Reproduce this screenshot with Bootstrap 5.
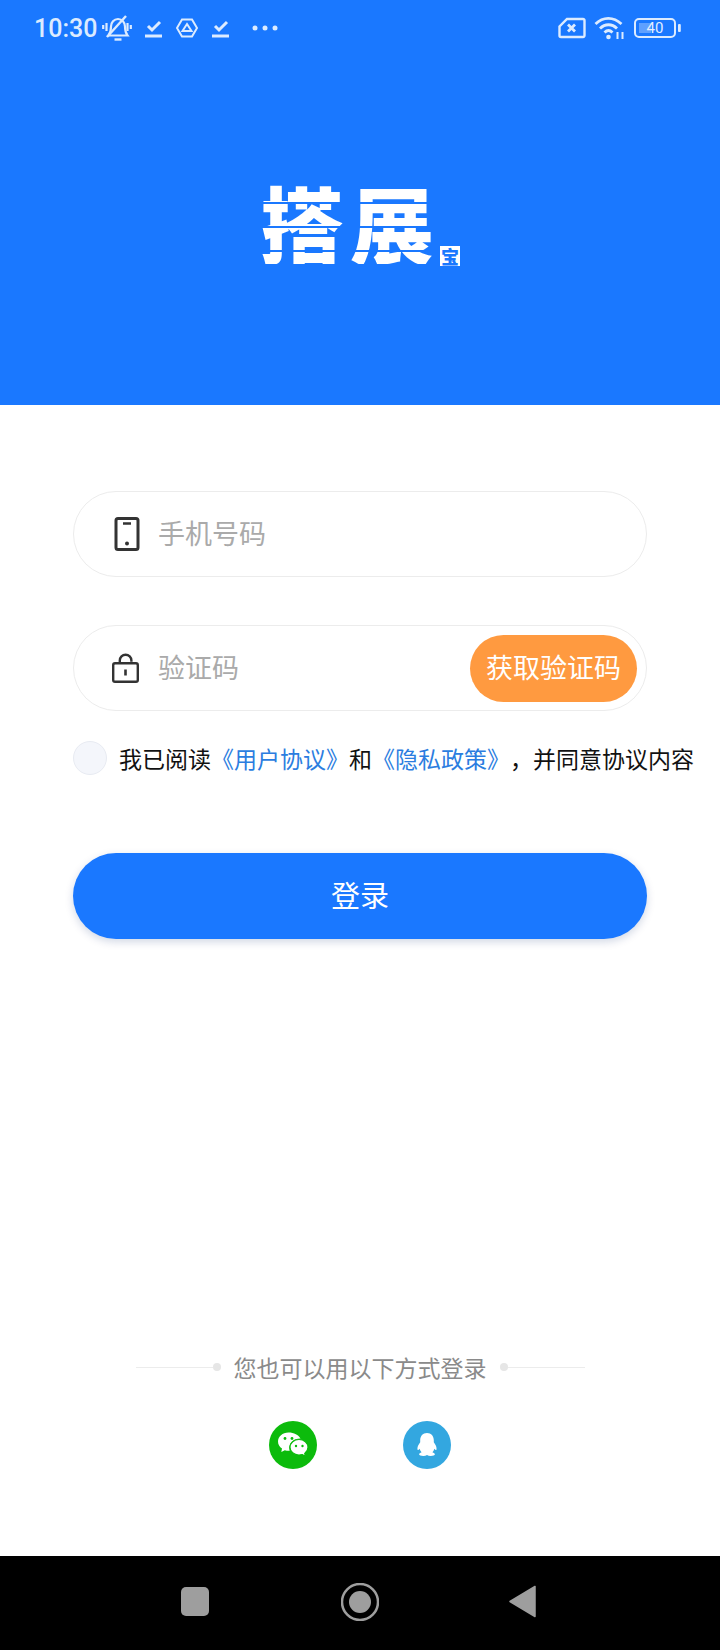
<!DOCTYPE html>
<html lang="zh">
<head>
<meta charset="utf-8">
<title>搭展宝</title>
<link href="https://cdn.jsdelivr.net/npm/bootstrap@5.3.0/dist/css/bootstrap.min.css" rel="stylesheet">
<style>
html,body{margin:0;height:1650px;overflow:hidden;background:#fff}
body{font-family:"Noto Sans CJK SC","Liberation Sans",sans-serif;color:#111;text-spacing-trim:space-all}
.shell{width:720px;height:1650px}
.hero{height:405px;background:#1a78ff}
.statusbar{height:56px;padding:0 39px 0 34px;color:#dcebff}
.clock{font:500 25px/1 Roboto,sans-serif;width:62px;margin-right:6px;white-space:nowrap}
.statusbar svg{display:block;fill:none;stroke:currentColor;stroke-width:2}
.gap-check{margin-left:13px}
.gap-tri{margin-left:13px}
.gap-check2{margin-left:14px}
.gap-dots{margin-left:22px}
.wordmark{height:349px;padding-bottom:18px}
.logo-text{font-size:84px;line-height:84px;font-weight:900;letter-spacing:6px;color:transparent;background:repeating-linear-gradient(180deg,#fff 0,#fff 22px,#1a78ff 22px,#1a78ff 24px);-webkit-background-clip:text;background-clip:text}
.logo-sub{width:20px;height:20px;background:#fff;color:#1a78ff;font-size:18px;line-height:20px;font-weight:900;margin-left:0;margin-bottom:-2px}
.formwrap{padding:86px 73px 0}
.pillfield{height:86px;border:1px solid #ececec;border-radius:43px;background:#fff;padding-left:38px}
.pillfield+.pillfield{margin-top:48px}
.fieldicon{width:30px;flex:none;margin-right:16px}
.fieldinput{flex:1;min-width:0;border:0;outline:0;background:transparent;font-size:27px;padding:0 0 2px;color:#333}
.fieldinput::placeholder{color:#aaa;opacity:1}
.codebtn{width:167px;height:67px;border:0;border-radius:34px;background:#ff9a40;color:#fff;font-size:27px;margin-right:9px;padding:0 0 2px;white-space:nowrap}
.agree{margin-top:29px;height:36px;font-size:23px;white-space:nowrap;width:640px}
.tickcircle{width:34px;height:34px;border-radius:50%;background:#f4f6fb;border:1px solid #e8ebf2;margin-right:12px;flex:none}
.agree a{color:#2b7de0;text-decoration:none}
.loginbtn{display:block;width:574px;height:86px;margin-top:77px;border:0;border-radius:43px;background:#1a78ff;color:#fff;font-size:29px;box-shadow:0 3px 8px rgba(0,40,110,.18);padding:0 0 2px}
.altlogin{margin-top:auto;padding-bottom:87px}
.altline{width:77px;height:1px;background:#ececec}
.altdot{width:8px;height:8px;border-radius:50%;background:#e6e6e6}
.alttext{font-size:23px;line-height:34px;color:#8a8a8a;margin:0 13px}
.altrow{gap:86px;margin-top:37px}
.socialbtn{width:48px;height:48px;border-radius:50%;border:0;padding:0;display:block}
.socialbtn svg{display:block}
.wx{background:#0cbb0c}
.qq{background:#33a7e0}
.navbarbottom{height:94px;background:#000;padding-left:181px;padding-bottom:3px}
.navsquare{width:28px;height:29px;border-radius:5px;background:#9e9e9e}
.navcircle{margin-left:132px;margin-right:130px;display:block}
.navtri{display:block}
</style>
</head>
<body>
<div class="shell d-flex flex-column">
  <header class="hero d-flex flex-column">
    <div class="statusbar d-flex align-items-center">
      <span class="clock">10:30</span>
      <svg width="30" height="28" viewBox="0 0 30 28"><path d="M6.500 21.500c1.500-2 2.500-5 2.500-9 0-4 3-7.500 7-7.500s7 3.500 7 7.500c0 4 1 7 2.500 9z" stroke-width="2.200"/><path d="M12.500 25.500h7" stroke-width="2.400"/><path d="M5 23L24 2" stroke-width="2.400"/><path d="M4.500 9v8M1.200 11v4M25.500 9v8M28.800 11v4" stroke-width="2.200"/></svg>
      <svg class="gap-check" width="18" height="20" viewBox="0 0 18 20"><path d="M3 8l4 4 8-8" stroke-width="3"/><path d="M0 18h17" stroke-width="3"/></svg>
      <svg class="gap-tri" width="22" height="20" viewBox="0 0 22 20"><path d="M6 1.500h10l5 8.500-5 8.500H6L1 10z"/><path d="M11 6l4.500 7h-9z"/></svg>
      <svg class="gap-check2" width="18" height="20" viewBox="0 0 18 20"><path d="M3 8l4 4 8-8" stroke-width="3"/><path d="M0 18h17" stroke-width="3"/></svg>
      <svg class="gap-dots" width="26" height="6" viewBox="0 0 26 6"><circle cx="3" cy="3" r="2.500" fill="currentColor" stroke="none"/><circle cx="13" cy="3" r="2.500" fill="currentColor" stroke="none"/><circle cx="23" cy="3" r="2.500" fill="currentColor" stroke="none"/></svg>
      <svg class="ms-auto" width="28" height="22" viewBox="0 0 28 22"><path d="M9 2h16a1.500 1.500 0 0 1 1.500 1.500v15a1.500 1.500 0 0 1-1.500 1.500H3a1.500 1.500 0 0 1-1.500-1.500V9.500z" stroke-width="2.400"/><path d="M10 7.500l7 7M17 7.500l-7 7" stroke-width="2.800"/></svg>
      <svg class="ms-2" width="32" height="24" viewBox="0 0 32 24"><path d="M1.500 8c7.500-7.500 18-7.500 26 0M6 12.500c5-5 12-5 17 0M10.500 16.500c2.500-2.500 5.500-2.500 8 0" stroke-width="2.800"/><circle cx="14.500" cy="21" r="2.300" fill="currentColor" stroke="none"/><path d="M23.500 16v7M28.500 16v7" stroke-width="2"/></svg>
      <svg class="ms-2" width="47" height="20" viewBox="0 0 47 20"><rect x="1" y="1" width="40" height="18" rx="4" stroke-width="2"/><rect x="5" y="5" width="12" height="10" fill="#fff" fill-opacity=".3" stroke="none"/><text x="21" y="15.200" font-family="Roboto,sans-serif" font-size="15" text-anchor="middle" fill="#e3eeff" stroke="none">40</text><rect x="44" y="6" width="2.800" height="8" rx="1" fill="currentColor" stroke="none"/></svg>
    </div>
    <div class="wordmark d-flex justify-content-center align-items-center">
      <div class="d-flex align-items-end">
        <span class="logo-text">搭展</span>
        <span class="logo-sub text-center">宝</span>
      </div>
    </div>
  </header>

  <main class="flex-grow-1 d-flex flex-column">
    <form class="formwrap" onsubmit="return false">
      <div class="pillfield d-flex align-items-center">
        <span class="fieldicon d-flex justify-content-center">
          <svg width="26" height="34" viewBox="0 0 26 34" fill="none" stroke="#333" stroke-width="3"><rect x="2" y="1.500" width="22" height="31" rx="2"/><path d="M9 6.500h8" stroke-width="2.500"/><circle cx="13" cy="26.500" r="2" fill="#333" stroke="none"/></svg>
        </span>
        <input class="fieldinput" type="text" placeholder="手机号码">
      </div>
      <div class="pillfield d-flex align-items-center">
        <span class="fieldicon d-flex justify-content-start">
          <svg width="27" height="30" viewBox="0 0 27 30" fill="none" stroke="#333" stroke-width="2.400"><rect x="1.200" y="10.200" width="24.600" height="18.600" rx="1.800"/><path d="M7.800 10V7.500a5.800 5.800 0 0 1 11.600 0v1.300"/><path d="M13.500 16.500v6" stroke-width="2.600"/></svg>
        </span>
        <input class="fieldinput" type="text" placeholder="验证码">
        <button class="codebtn" type="button">获取验证码</button>
      </div>
      <div class="agree d-flex align-items-center">
        <span class="tickcircle"></span>
        <span>我已阅读<a href="#">《用户协议》</a>和<a href="#">《隐私政策》</a>，并同意协议内容</span>
      </div>
      <button class="loginbtn" type="button">登录</button>
    </form>

    <section class="altlogin">
      <div class="d-flex justify-content-center align-items-center">
        <span class="altline"></span><span class="altdot"></span>
        <span class="alttext">您也可以用以下方式登录</span>
        <span class="altdot"></span><span class="altline"></span>
      </div>
      <div class="altrow d-flex justify-content-center">
        <button class="socialbtn wx" type="button" aria-label="微信">
          <svg width="48" height="48" viewBox="0 0 48 48"><path fill="#fff" d="M19.500 11.500c-6 0-10.500 4-10.500 9 0 3 1.600 5.400 4 7L12.300 31l3.500-1.800c1.300.4 2.600.6 3.700.6h1.200c-.3-1-.5-2-.5-3 0-5.200 4.900-9.300 11-9.300h.3C29.500 14 25 11.500 19.500 11.500z"/><path fill="#fff" stroke="#0cbb0c" stroke-width="1.200" d="M30 18.500c-5 0-9 3.500-9 7.800s4 7.800 9 7.800c1.200 0 2.300-.2 3.300-.5l3.200 1.700-.8-2.900c2.100-1.500 3.300-3.700 3.300-6.100 0-4.300-4-7.800-9-7.800z"/><circle cx="16" cy="17.500" r="1.400" fill="#0cbb0c"/><circle cx="23" cy="17.500" r="1.400" fill="#0cbb0c"/><circle cx="27" cy="25" r="1.200" fill="#0cbb0c"/><circle cx="33.500" cy="25" r="1.200" fill="#0cbb0c"/></svg>
        </button>
        <button class="socialbtn qq" type="button" aria-label="QQ">
          <svg width="48" height="48" viewBox="0 0 48 48"><path fill="#fff" d="M24 12c-4.300 0-6.800 3.200-6.800 7.200v2.100c-1.900 2.500-3.200 5.300-2.700 7.200.3.900 1.100.6 2.100-.7.400 1.400 1.100 2.600 2 3.400-1.500.5-2.500 1.200-2.500 2.100 0 1.200 2 1.700 4.200 1.700 1.500 0 2.800-.3 3.700-.9.900.6 2.200.9 3.700.9 2.200 0 4.200-.5 4.200-1.700 0-.9-1-1.600-2.500-2.100.9-.8 1.600-2 2-3.400 1 1.300 1.800 1.600 2.100.7.500-1.900-.8-4.700-2.700-7.200v-2.100c0-4-2.500-7.200-6.800-7.200z"/></svg>
        </button>
      </div>
    </section>
  </main>

  <nav class="navbarbottom d-flex align-items-center">
    <span class="navsquare"></span>
    <svg class="navcircle" width="38" height="38" viewBox="0 0 38 38"><circle cx="19" cy="19" r="18" fill="none" stroke="#9e9e9e" stroke-width="2.500"/><circle cx="19" cy="19" r="11" fill="#9e9e9e"/></svg>
    <svg class="navtri" width="27" height="33" viewBox="0 0 27 33"><path d="M26 1.500v30L1 16.500z" fill="#9e9e9e" stroke="#9e9e9e" stroke-width="1.500" stroke-linejoin="round"/></svg>
  </nav>
</div>
<script src="https://cdn.jsdelivr.net/npm/bootstrap@5.3.0/dist/js/bootstrap.bundle.min.js"></script>
</body>
</html>
